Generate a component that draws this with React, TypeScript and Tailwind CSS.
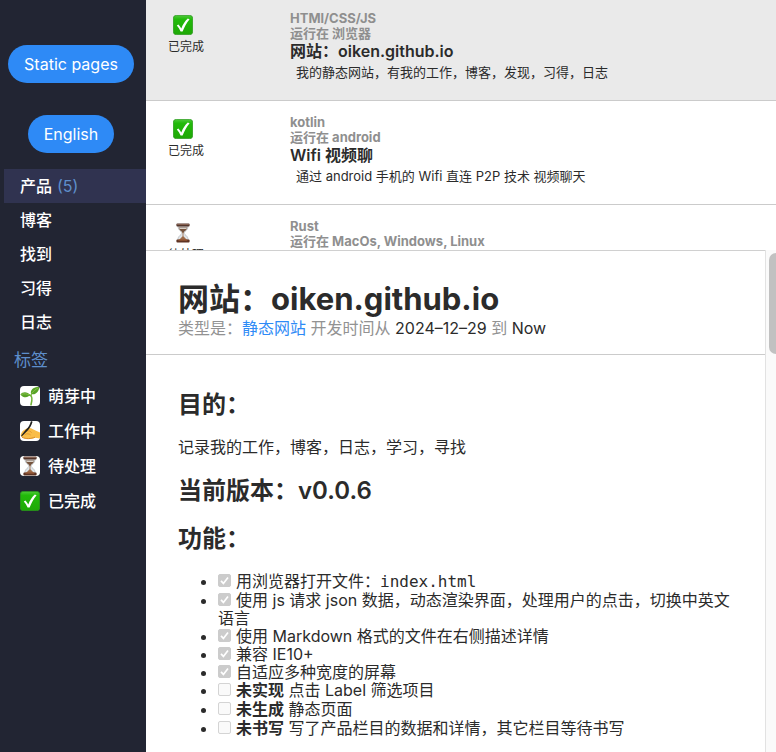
import { ReactNode } from "react";

function CheckIcon() {
  return (
    <svg viewBox="0 0 20 20" className="block size-5 shrink-0" aria-hidden="true">
      <defs>
        <linearGradient id="checkFill" x1="0" y1="0" x2="0" y2="1">
          <stop offset="0" stopColor="#4fca3a" />
          <stop offset="0.2" stopColor="#22ba0a" />
          <stop offset="1" stopColor="#1fa806" />
        </linearGradient>
      </defs>
      <rect x="0.4" y="0.4" width="19.2" height="19.2" rx="2.8" fill="url(#checkFill)" stroke="#2a9a1c" strokeWidth="0.8" />
      <path d="M3.8 10.6 L5.4 9.6 C6.6 10.8 7.6 12.2 8.3 13.4 C9.8 9.4 12 6.2 14.8 3.6 L16.6 4.2 C13.6 7.8 11.4 11.8 9.6 16.6 L7.6 16.6 C6.6 14.3 5.4 12.3 3.8 10.6Z" fill="#fff" />
    </svg>
  );
}

function HourglassIcon() {
  return (
    <svg viewBox="0 0 20 20" className="block size-5 shrink-0" aria-hidden="true">
      <path d="M5 3.4 C5 7.6 9 8.4 9 10 C9 11.6 4.8 12.6 4.8 17 L15.2 17 C15.2 12.6 11 11.6 11 10 C11 8.4 15 7.6 15 3.4Z" fill="#dfe4e8" stroke="#a9adb0" strokeWidth="0.6" />
      <path d="M5.6 4.6 C6.4 7.8 9.2 8.4 9.5 10 L10.5 10 C10.8 8.4 13.6 7.8 14.4 4.6Z" fill="#76543e" />
      <path d="M6.2 5 H13.8 L13.4 6 H6.6Z" fill="#d8d0c8" />
      <path d="M9.6 9 H10.4 V13.2 L14 17 H6 L9.6 13.2Z" fill="#9c6a48" />
      <rect x="3.4" y="0.4" width="13.2" height="3.2" rx="1" fill="#54352a" />
      <rect x="4" y="0.9" width="12" height="0.9" rx="0.4" fill="#967060" />
      <rect x="3.4" y="16.4" width="13.2" height="3.2" rx="1" fill="#5f3424" />
      <rect x="5.4" y="16.4" width="9" height="1.2" rx="0.5" fill="#b0683e" />
    </svg>
  );
}

function SproutIcon() {
  return (
    <svg viewBox="0 0 20 20" className="block size-5 shrink-0" aria-hidden="true">
      <path d="M11 18.8 C12.2 14.5 12 10.4 10.4 9.4 C9 8.6 7 9.2 6 9.4" fill="none" stroke="#71b236" strokeWidth="1.6" strokeLinecap="round" />
      <path d="M11 10 C11 7.8 12.6 6 15 4.8" fill="none" stroke="#71b236" strokeWidth="1.2" />
      <path d="M0.4 8.4 C2.4 5.4 7.6 5.4 10 8.8 C8.2 12 3.4 12.4 0.4 8.4Z" fill="#58a327" />
      <path d="M10.8 6.2 C11.2 2.4 15 0.8 19.4 1 C18.8 5.6 15.6 9 12 8.2 C11.2 7.8 10.8 7.2 10.8 6.2Z" fill="#58a327" />
      <path d="M1.4 8.4 C4 7.4 7 7.8 9 8.8 M11.6 7.4 C13.6 5 16 3 18.4 1.8" fill="none" stroke="#9ccf59" strokeWidth="0.7" />
    </svg>
  );
}

function WritingIcon() {
  return (
    <svg viewBox="0 0 20 20" className="block size-5 shrink-0" aria-hidden="true">
      <path d="M0.8 15 C0.4 12.4 2.6 9.4 5 8.4 C7.4 7 10.6 6.4 12.4 8 L16 9.8 L20 11.6 V17.6 L15 16.8 C10.6 18.8 3.6 18.2 0.8 15Z" fill="#f9bd48" />
      <path d="M2 16.2 C6 18.4 11 17.8 15 16.2" fill="none" stroke="#d88a28" strokeWidth="1" />
      <path d="M4.8 10.8 C7.2 9.2 10 9.4 11.4 11.4 M5 13.4 C7 12.4 9 12.6 10.4 13.8" fill="none" stroke="#df962c" strokeWidth="0.8" strokeLinecap="round" />
      <path d="M11 0 L12.6 0.8 C11.6 4.4 9.8 7.6 7.2 10 L2.2 15 L1 15.6 L1.4 14.2 L5.8 8.8 C8.4 6.6 10 3.6 11 0Z" fill="#202020" />
    </svg>
  );
}

type Status = "done" | "pending";

const statusLabel: Record<Status, string> = { done: "已完成", pending: "待处理" };

interface Project {
  tech: string;
  platform: string;
  title: string;
  summary: string;
  status: Status;
}

const projects: Project[] = [
  { tech: "HTMl/CSS/JS", platform: "运行在 浏览器", title: "网站：oiken.github.io", summary: "我的静态网站，有我的工作，博客，发现，习得，日志", status: "done" },
  { tech: "kotlin", platform: "运行在 android", title: "Wifi 视频聊", summary: "通过 android 手机的 Wifi 直连 P2P 技术 视频聊天", status: "done" },
  { tech: "Rust", platform: "运行在 MacOs, Windows, Linux", title: "", summary: "", status: "pending" },
];

const sections = ["产品", "博客", "找到", "习得", "日志"];

const tags: { label: string; icon: ReactNode; tile: boolean }[] = [
  { label: "萌芽中", icon: <SproutIcon />, tile: true },
  { label: "工作中", icon: <WritingIcon />, tile: true },
  { label: "待处理", icon: <HourglassIcon />, tile: true },
  { label: "已完成", icon: <CheckIcon />, tile: false },
];

const features: { id: string; done: boolean; text: ReactNode }[] = [
  { id: "open", done: true, text: <>用浏览器打开文件：<code className="font-['DejaVu_Sans_Mono',monospace] text-base leading-[18px]">index.html</code></> },
  { id: "json", done: true, text: "使用 js 请求 json 数据，动态渲染界面，处理用户的点击，切换中英文语言" },
  { id: "markdown", done: true, text: "使用 Markdown 格式的文件在右侧描述详情" },
  { id: "ie", done: true, text: "兼容 IE10+" },
  { id: "responsive", done: true, text: "自适应多种宽度的屏幕" },
  { id: "filter", done: false, text: <><strong>未实现</strong> 点击 Label 筛选项目</> },
  { id: "static", done: false, text: <><strong>未生成</strong> 静态页面</> },
  { id: "columns", done: false, text: <><strong>未书写</strong> 写了产品栏目的数据和详情，其它栏目等待书写</> },
];

function Sidebar() {
  return (
    <aside className="flex w-[146px] shrink-0 flex-col bg-[#222533] text-white">
      <div className="flex flex-col items-center gap-8 pt-[45px] pr-1">
        <button className="h-[38px] rounded-full bg-[#2e8af6] px-4">Static pages</button>
        <button className="h-[38px] rounded-full bg-[#2e8af6] px-4">English</button>
      </div>
      <nav className="mt-4 ml-1 font-medium">
        <ul>
          {sections.map((name, i) => (
            <li key={name} className={i === 0 ? "bg-[#303350]" : ""}>
              <a href="#" className="flex h-[34px] items-center gap-[5px] pl-4">
                {name}
                {i === 0 && <span className="font-normal text-[#5e8ecb]">(5)</span>}
              </a>
            </li>
          ))}
        </ul>
        <h2 className="mt-[3px] flex h-9 items-center pl-[10px] text-[17px] font-normal text-[#5e8ecb]">标签</h2>
        <ul>
          {tags.map((tag) => (
            <li key={tag.label}>
              <a href="#" className="flex h-[35px] items-center gap-2 pl-4">
                <span className={tag.tile ? "overflow-hidden rounded-[4px] bg-white" : ""}>{tag.icon}</span>
                {tag.label}
              </a>
            </li>
          ))}
        </ul>
      </nav>
    </aside>
  );
}

function ProjectRow({ project, selected }: { project: Project; selected: boolean }) {
  return (
    <li className={`flex h-[104px] shrink-0 border-b border-[#cbcbcb] ${selected ? "bg-[#eaeaea]" : "bg-white"}`}>
      <div className="w-36 shrink-0 pt-[18px] pl-[22px] text-xs leading-4">
        <div className="pl-[5px]">{project.status === "done" ? <CheckIcon /> : <HourglassIcon />}</div>
        <p className="mt-1">{statusLabel[project.status]}</p>
      </div>
      <div className="min-w-0 pt-[13px]">
        <p className="text-[13px] leading-4 font-bold text-[#8f8f8f]">{project.tech}</p>
        <p className="text-[13px] leading-[15px] font-bold text-[#8f8f8f]">{project.platform}</p>
        <h3 className="text-base leading-5 font-semibold">{project.title}</h3>
        <p className="mt-px ml-[6px] text-[13px] leading-5">{project.summary}</p>
      </div>
    </li>
  );
}

function FeatureItem({ id, done, text }: { id: string; done: boolean; text: ReactNode }) {
  return (
    <li className={done ? "leading-[18px]" : "leading-[19px]"}>
      <span className="relative mr-[5px] inline-block size-[13px]">
        <input
          id={id}
          type="checkbox"
          defaultChecked={done}
          disabled
          className="block size-[13px] appearance-none rounded-[2px] border border-[#d4d4d4] bg-[#fafafa] checked:border-[#cccccc] checked:bg-[#cccccc]"
        />
        {done && (
          <svg viewBox="0 0 13 13" className="pointer-events-none absolute inset-0 size-[13px]" aria-hidden="true">
            <path d="M3 6.8 L5.4 9.4 L10 3.4" fill="none" stroke="#fff" strokeWidth="1.7" />
          </svg>
        )}
      </span>
      <label htmlFor={id}>{text}</label>
    </li>
  );
}

export default function App() {
  return (
    <div className="flex h-screen overflow-hidden bg-white font-['Inter','Noto_Sans_CJK_SC',sans-serif] text-base leading-[18px] text-[#2b2b2b]">
      <Sidebar />
      <main className="flex min-w-0 flex-1 flex-col">
        <ul className="-mt-[3px] flex h-[253px] shrink-0 flex-col overflow-hidden">
          {projects.map((p, i) => (
            <ProjectRow key={p.tech} project={p} selected={i === 0} />
          ))}
        </ul>
        <div className="flex min-h-0 flex-1">
          <article className="min-w-0 flex-1 overflow-hidden border-t border-[#d0d0d0]">
            <header className="border-b border-[#cbcbcb] px-8 pt-7 pb-[17px]">
              <h1 className="text-[31px] leading-10 font-bold">网站：oiken.github.io</h1>
              <p className="text-[#929292]">
                类型是：<a href="#" className="text-[#2e8af6]">静态网站</a> 开发时间从 <time className="text-[#2b2b2b]">2024–12–29</time> 到 <span className="text-[#2b2b2b]">Now</span>
              </p>
            </header>
            <div className="px-8">
              <h2 className="mt-9 text-2xl leading-7 font-semibold">目的：</h2>
              <p className="mt-[19px]">记录我的工作，博客，日志，学习，寻找</p>
              <h2 className="mt-[21px] text-2xl leading-7 font-semibold">当前版本：v0.0.6</h2>
              <h2 className="mt-5 text-2xl leading-7 font-semibold">功能：</h2>
              <ul className="mt-[19px] list-disc pl-10">
                {features.map((f) => (
                  <FeatureItem key={f.id} {...f} />
                ))}
              </ul>
            </div>
          </article>
          <div className="w-[11px] shrink-0 border-l border-[#e2e2e2] bg-[#fafafa] pt-[3px] pl-[3px]">
            <div className="h-[101px] rounded-l-full bg-[#c1c1c1]" />
          </div>
        </div>
      </main>
    </div>
  );
}
